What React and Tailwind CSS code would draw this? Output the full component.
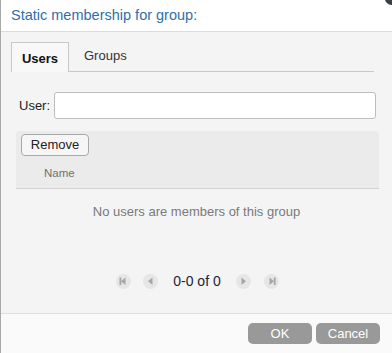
import React from 'react';

const font = { fontFamily: '"Liberation Sans", Arial, sans-serif' };

const PagerButton = ({ kind }) => {
  const tri = kind === 'first' || kind === 'prev' ? 'M9.5 3.5 L9.5 11 L5 7.25 Z' : 'M5.5 3.5 L5.5 11 L10 7.25 Z';
  return (
    <span className="flex h-[15px] w-[15px] items-center justify-center rounded-full bg-[#e6e6e6]">
      <svg width="15" height="15" viewBox="0 0 15 15">
        <path d={tri} fill="#a6a6a6" />
        {kind === 'first' && <rect x="3.5" y="3.5" width="1.8" height="7.5" fill="#a6a6a6" />}
        {kind === 'last' && <rect x="9.8" y="3.5" width="1.8" height="7.5" fill="#a6a6a6" />}
      </svg>
    </span>
  );
};

export default function App() {
  return (
    <div className="relative h-[353px] w-[392px] overflow-hidden bg-white" style={font}>
      <div className="flex h-full border-l border-[#a8a8a8]">
        <div className="flex h-full flex-1 flex-col">
          {/* header */}
          <div className="flex h-[32px] items-center border-b border-[#dcdcdc] bg-white pl-[10px]">
            <span className="text-[14.5px] text-[#2f6fa7]">Static membership for group:</span>
          </div>

          {/* body */}
          <div className="flex flex-1 flex-col bg-[#f4f4f4] px-[10px] pt-[10px]">
            <div className="flex h-[30px] items-end border-b border-[#c8c8c8] mr-[8px]">
              <div className="-mb-px flex h-[30px] w-[58px] items-center justify-center border border-b-0 border-[#c8c8c8] bg-[#f8f8f8] pt-[3px] text-[13px] font-bold text-[#111]">
                Users
              </div>
              <div className="flex h-[30px] items-start pl-[15px] pt-[5px] text-[13px] text-[#333]">
                Groups
              </div>
            </div>

            <div className="mt-[20px] flex items-center pl-[8px] pr-[6px]">
              <span className="mr-[4px] text-[13px] text-[#222]">User:</span>
              <div className="h-[27px] flex-1 rounded-[3px] border border-[#bdbdbd] bg-white" />
            </div>

            <div className="mt-[12px] ml-[5px] mr-[3px] flex flex-col rounded-t-[4px] border-b border-[#d2d2d2] bg-[#ebebeb]">
              <div className="px-[5px] pt-[3px]">
                <button className="flex h-[22px] w-[68px] items-center justify-center rounded-[4px] border border-[#a9a9a9] bg-[#f6f6f6] text-[13px] text-[#222]">
                  Remove
                </button>
              </div>
              <div className="pl-[28px] pt-[9px] pb-[6px] text-[11.5px] text-[#6f6f6f]">Name</div>
            </div>

            <div className="mt-[13px] text-center text-[13px] text-[#7a7a7a]">No users are members of this group</div>

            <div className="mt-[49px] flex items-center justify-center pl-[2px]">
              <PagerButton kind="first" />
              <span className="w-[12px]" />
              <PagerButton kind="prev" />
              <span className="mx-[15px] text-[14px] text-[#1b2435]">0-0 of 0</span>
              <PagerButton kind="next" />
              <span className="w-[13px]" />
              <PagerButton kind="last" />
            </div>
          </div>

          {/* footer */}
          <div className="flex h-[40px] items-center justify-end gap-[4px] border-t border-[#dedede] bg-[#fafafa] pr-[12px]">
            <button className="h-[21px] w-[64px] rounded-[5px] bg-[#999999] text-[13px] text-white">OK</button>
            <button className="h-[21px] w-[64px] rounded-[5px] bg-[#999999] text-[13px] text-white">Cancel</button>
          </div>
        </div>
      </div>
      <div className="absolute right-[-6px] top-[-8px] h-[13px] w-[13px] rounded-full bg-[#3b3f42]" />
    </div>
  );
}
